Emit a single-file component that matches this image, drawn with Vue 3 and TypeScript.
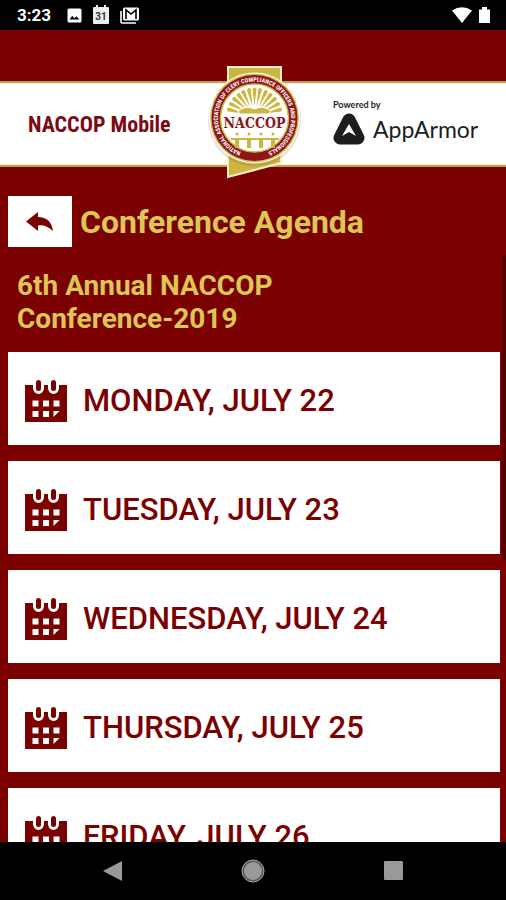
<script setup lang="ts">
interface AgendaDay {
  id: number
  label: string
}

const days: AgendaDay[] = [
  { id: 22, label: 'MONDAY, JULY 22' },
  { id: 23, label: 'TUESDAY, JULY 23' },
  { id: 24, label: 'WEDNESDAY, JULY 24' },
  { id: 25, label: 'THURSDAY, JULY 25' },
  { id: 26, label: 'FRIDAY, JULY 26' },
]

// Angles of the sunburst above the wordmark, in degrees from vertical
const rays: number[] = [-76, -63, -50, -37, -25, -12, 0, 12, 25, 37, 50, 63, 76]
const figures: number[] = [34, 46, 58, 70]
</script>

<template>
  <div class="phone">
    <div class="status">
      <span class="clock">3:23</span>
      <svg class="status-icon" width="15" height="15" viewBox="0 0 15 15" aria-hidden="true">
        <rect x="0.5" y="0.5" width="14" height="14" rx="1.5" fill="#fff" />
        <path d="M2.5 11.5 5.3 7.8l2 2.4 2-2 3.2 3.3z" fill="#000" />
      </svg>
      <svg class="status-icon" width="18" height="20" viewBox="0 0 18 20" aria-hidden="true">
        <path d="M2 2h2V0h2v2h6V0h2v2h2q1 0 1 1v15q0 1-1 1H2q-1 0-1-1V3q0-1 1-1z" fill="#eee" />
        <text x="9" y="15" class="day-number" text-anchor="middle">31</text>
      </svg>
      <svg class="status-icon" width="20" height="17" viewBox="0 0 20 17" aria-hidden="true">
        <path d="M1 4v11q0 1 1 1h14" fill="none" stroke="#fff" stroke-width="1.6" />
        <rect x="3" y="0.5" width="16" height="13" rx="1.5" fill="#fff" />
        <path d="M6 12V3l5 4 5-4v9" fill="none" stroke="#000" stroke-width="1.6" />
      </svg>
      <svg class="signal" width="38" height="18" viewBox="0 0 38 18" aria-hidden="true">
        <path d="M0 4.500Q10 -2 20 4.500L10 17z" fill="#fff" />
        <path d="M27 3.500h3V1h5v2.500h3V17H27z" fill="#fff" />
      </svg>
    </div>

    <header class="banner">
      <span class="brand">NACCOP Mobile</span>
      <svg class="seal" width="100" height="118" viewBox="0 0 100 118" role="img" aria-label="NACCOP seal">
        <defs>
          <path id="seal-ring" d="M48.500 92.400A36.500 36.500 0 1 1 54.500 92.400" />
        </defs>
        <path d="M25 5H78V101L25 115z" fill="#cdb63f" stroke="#f6efd0" stroke-width="2" />
        <circle cx="51.500" cy="58" r="46.500" fill="#6b5b4a" opacity="0.18" />
        <circle cx="51.500" cy="56" r="45.500" fill="#fff" />
        <circle cx="51.500" cy="56" r="44.500" fill="#d3bf59" />
        <circle cx="51.500" cy="56" r="43" fill="#8e1519" />
        <circle cx="51.500" cy="56" r="34" fill="#fff" stroke="#cdb63f" stroke-width="1.500" />
        <path
          v-for="angle in rays"
          :key="angle"
          d="M51.500 44 49.500 27Q51.500 24 53.500 27z"
          fill="#cdb63f"
          :transform="`rotate(${angle} 51.500 54)`"
        />
        <path d="M35 49Q43 43 51.500 47Q60 43 68 49L66 52H37z" fill="#cdb63f" stroke="#fff" />
        <g v-for="x in figures" :key="x" fill="#cdb63f">
          <circle :cx="x" cy="72" r="1.500" />
          <path :d="`M${x - 6} 76h12v2h-4V86h-4V78h-4z`" />
        </g>
        <text x="51.500" y="66" class="seal-name" text-anchor="middle">NACCOP</text>
        <text class="seal-ring-text">
          <textPath href="#seal-ring" startOffset="50%" text-anchor="middle">NATIONAL ASSOCIATION OF CLERY COMPLIANCE OFFICERS AND PROFESSIONALS</textPath>
        </text>
      </svg>
      <div class="sponsor">
        <span class="powered">Powered by</span>
        <div class="sponsor-row">
          <svg width="32" height="32" viewBox="0 0 32 32" aria-hidden="true">
            <path d="M16 7 7 25H25z" fill="#1d1d1f" stroke="#1d1d1f" stroke-width="13" stroke-linejoin="round" />
            <path d="M16 11 23 23 16 19 9 23z" fill="#fff" />
          </svg>
          <span class="sponsor-name">AppArmor</span>
        </div>
      </div>
    </header>

    <main class="content">
      <div class="title-bar">
        <button type="button" class="back" aria-label="Back">
          <svg width="28" height="20" viewBox="0 0 28 20" aria-hidden="true">
            <path d="M0 9.500 12 0V5Q25 5 27 19Q20 12.500 12 13.500V19z" fill="#7b0000" />
          </svg>
        </button>
        <h1>Conference Agenda</h1>
      </div>
      <section class="agenda">
        <h2>6th Annual NACCOP Conference-2019</h2>
        <ul class="days">
          <li v-for="day in days" :key="day.id">
            <a class="day" :href="`#july-${day.id}`">
              <svg width="42" height="42" viewBox="0 0 42 42" aria-hidden="true">
                <rect y="5" width="42" height="37" fill="#7b0000" />
                <path
                  d="M8 4V8a5.500 6 0 0 0 11 0V4zM23 4V8a5.500 6 0 0 0 11 0V4z"
                  fill="#fff"
                />
                <rect x="11" width="5" height="11" rx="2.500" fill="#7b0000" />
                <rect x="26" width="5" height="11" rx="2.500" fill="#7b0000" />
                <path
                  d="M7.500 20.500h6v6h-6zM18 20.500h6v6h-6zM28.500 20.500h6v6h-6zM7.500 31h6v6h-6zM18 31h6v6h-6zM28.500 31h6L28.500 37z"
                  fill="#fff"
                />
              </svg>
              <span>{{ day.label }}</span>
            </a>
          </li>
        </ul>
        <div class="scroll-thumb"></div>
      </section>
    </main>

    <nav class="system-nav">
      <button type="button" aria-label="Back">
        <svg width="24" height="24" viewBox="0 0 24 24"><path d="M2 12 21 2V22z" fill="#999" /></svg>
      </button>
      <button type="button" aria-label="Home">
        <svg width="24" height="24" viewBox="0 0 24 24">
          <circle cx="12" cy="12" r="11" fill="#555" stroke="#aaa" />
          <circle cx="12" cy="12" r="9" fill="#999" />
        </svg>
      </button>
      <button type="button" aria-label="Recent apps">
        <svg width="24" height="24" viewBox="0 0 24 24"><rect x="3" y="2" width="19" height="19" rx="1" fill="#999" /></svg>
      </button>
    </nav>
  </div>
</template>

<style>
body {
  margin: 0;
  background: #7b0000;
}
</style>

<style scoped>
.phone {
  display: flex;
  flex-direction: column;
  height: 100vh;
  overflow: hidden;
  background: #7b0000;
  font-family: Roboto, "Liberation Sans", sans-serif;
}
.status {
  display: flex;
  align-items: center;
  flex: none;
  height: 30px;
  padding: 0 16px 0 17px;
  background: #000;
  color: #fff;
}
.clock {
  margin-right: 6px;
  font-size: 17px;
  font-weight: 700;
}
.status-icon {
  margin-left: 10px;
}
.day-number {
  font-size: 10px;
  font-weight: 700;
  fill: #333;
}
.signal {
  margin-left: auto;
}
.banner {
  display: grid;
  grid-template-columns: 1fr 100px 1fr;
  align-items: center;
  flex: none;
  height: 82px;
  margin-top: 51px;
  border: solid #c4a24c;
  border-width: 2px 0;
  background: #fff;
  box-shadow: inset 0 1px #fbf3cf, inset 0 -1px #fbf3cf;
}
.brand {
  padding-left: 28px;
  color: #7b0a12;
  font-family: "Roboto Condensed", Roboto, sans-serif;
  font-size: 22px;
  font-weight: 700;
  white-space: nowrap;
}
.seal {
  margin: -24px 0 -18px;
}
.seal-name {
  fill: #8e1519;
  stroke: #fff;
  stroke-width: 3px;
  paint-order: stroke;
  font-family: "DejaVu Serif Condensed", "Liberation Serif", serif;
  font-size: 14px;
  font-weight: 700;
}
.seal-ring-text {
  fill: #fff;
  font-family: "Roboto Condensed", Roboto, sans-serif;
  font-size: 6px;
  font-weight: 700;
}
.sponsor {
  padding: 0 0 4px 30px;
  color: #1d1d1f;
  font-family: Lato, sans-serif;
}
.powered {
  display: block;
  margin-bottom: 2px;
  font-size: 9px;
  font-weight: 700;
  line-height: 12px;
}
.sponsor-row {
  display: flex;
  align-items: center;
  gap: 8px;
}
.sponsor-name {
  font-size: 23px;
  line-height: 32px;
}
.content {
  display: flex;
  flex-direction: column;
  flex: 1;
  min-height: 0;
  overflow: hidden;
}
.title-bar {
  display: flex;
  align-items: center;
  flex: none;
  gap: 8px;
  padding: 29px 8px 8px;
}
.back {
  display: flex;
  align-items: center;
  justify-content: center;
  width: 64px;
  height: 51px;
  padding: 0;
  border: 0;
  background: #fff;
}
h1,
h2 {
  margin: 0;
  color: #dcc755;
  font-weight: 700;
}
h1 {
  font-size: 32px;
  line-height: 40px;
}
.agenda {
  position: relative;
  flex: 1;
  min-height: 0;
  overflow: hidden;
}
h2 {
  max-width: 320px;
  padding: 14px 17px 17px;
  font-size: 28px;
  line-height: 33px;
}
.days {
  display: grid;
  gap: 16px;
  margin: 0;
  padding: 0 6px 0 8px;
  list-style: none;
}
.day {
  display: flex;
  align-items: center;
  gap: 16px;
  height: 93px;
  padding: 4px 17px 0;
  box-sizing: border-box;
  background: #fff;
  color: #7b0000;
  font-size: 31px;
  font-weight: 500;
  text-decoration: none;
  white-space: nowrap;
}
.scroll-thumb {
  position: absolute;
  top: 0;
  right: 0;
  width: 4px;
  height: 52%;
  background: #560000;
}
.system-nav {
  display: flex;
  justify-content: center;
  gap: 116px;
  flex: none;
  height: 58px;
  background: #000;
}
.system-nav button {
  display: flex;
  align-items: center;
  padding: 0;
  border: 0;
  background: none;
}
</style>
